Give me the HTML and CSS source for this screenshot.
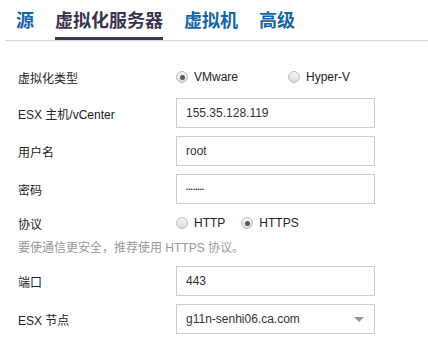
FILE: index.html
```html
<!DOCTYPE html>
<html>
<head>
    <title>虚拟化服务器</title>
    <link rel="stylesheet" href="styles.css">
</head>
<body>
    <div class="tabs">
        <span class="tab">源</span>
        <span class="tab active">虚拟化服务器</span>
        <span class="tab">虚拟机</span>
        <span class="tab">高级</span>
    </div>

    <div class="form">
        <div class="row row-type">
            <label class="label">虚拟化类型</label>
            <div class="radios">
                <span class="option wide"><span class="radio checked"></span>VMware</span>
                <span class="option"><span class="radio"></span>Hyper-V</span>
            </div>
        </div>
        <div class="row">
            <label class="label">ESX 主机/vCenter</label>
            <div class="field">155.35.128.119</div>
        </div>
        <div class="row">
            <label class="label">用户名</label>
            <div class="field">root</div>
        </div>
        <div class="row">
            <label class="label">密码</label>
            <div class="field"><span class="dots">••••••••</span></div>
        </div>
        <div class="row row-proto">
            <label class="label">协议</label>
            <div class="radios">
                <span class="option"><span class="radio"></span>HTTP</span>
                <span class="option"><span class="radio checked"></span>HTTPS</span>
            </div>
        </div>
        <p class="hint">要使通信更安全，推荐使用 HTTPS 协议。</p>
        <div class="row">
            <label class="label">端口</label>
            <div class="field">443</div>
        </div>
        <div class="row">
            <label class="label">ESX 节点</label>
            <div class="field select">g11n-senhi06.ca.com<span class="caret"></span></div>
        </div>
    </div>
</body>
</html>
```

FILE: styles.css
```css
body { margin: 0; font-family: "Liberation Sans", "Noto Sans CJK SC", sans-serif; font-size: 12px; color: #222; background: #fff; }

.tabs { display: flex; margin-left: 5px; padding-left: 11px; border-bottom: 1px solid #cfd6dd; }
.tab { font-family: "Noto Sans CJK SC", sans-serif; font-weight: bold; font-size: 18px; line-height: 18px; color: #1565a8; padding: 10px 0 9px; margin-right: 21px; border-bottom: 3px solid transparent; }
.tab.active { color: #3a3350; border-bottom-color: #3a3350; }

.form { padding: 21px 0 0 18px; }
.row { display: flex; align-items: center; height: 30px; margin-bottom: 8px; }
.row-type { margin-bottom: 6px; }
.row-proto { height: 22px; margin: 1px 0 6px; }
.label { width: 158px; flex-shrink: 0; }

.field { box-sizing: border-box; width: 199px; height: 30px; border: 1px solid #cccccc; padding: 0 9px; display: flex; align-items: center; color: #333; }
.select { justify-content: space-between; }
.caret { width: 0; height: 0; border-left: 5px solid transparent; border-right: 5px solid transparent; border-top: 5px solid #8b97a2; margin-right: 1px; }
.dots { font-size: 6px; letter-spacing: 0.2px; }

.radios { display: flex; align-items: center; }
.option { display: flex; align-items: center; margin-right: 16px; }
.option.wide { margin-right: 50px; }
.radio { box-sizing: border-box; width: 12px; height: 12px; border-radius: 50%; border: 1px solid #bdbdbd; background: linear-gradient(#f4f4f4, #dcdcdc); margin-right: 6px; position: relative; }
.radio.checked::after { content: ""; position: absolute; left: 2.5px; top: 2.5px; width: 5px; height: 5px; border-radius: 50%; background: #5a5a5a; }

.hint { margin: 0 0 10px; height: 16px; line-height: 16px; color: #999; }
```
